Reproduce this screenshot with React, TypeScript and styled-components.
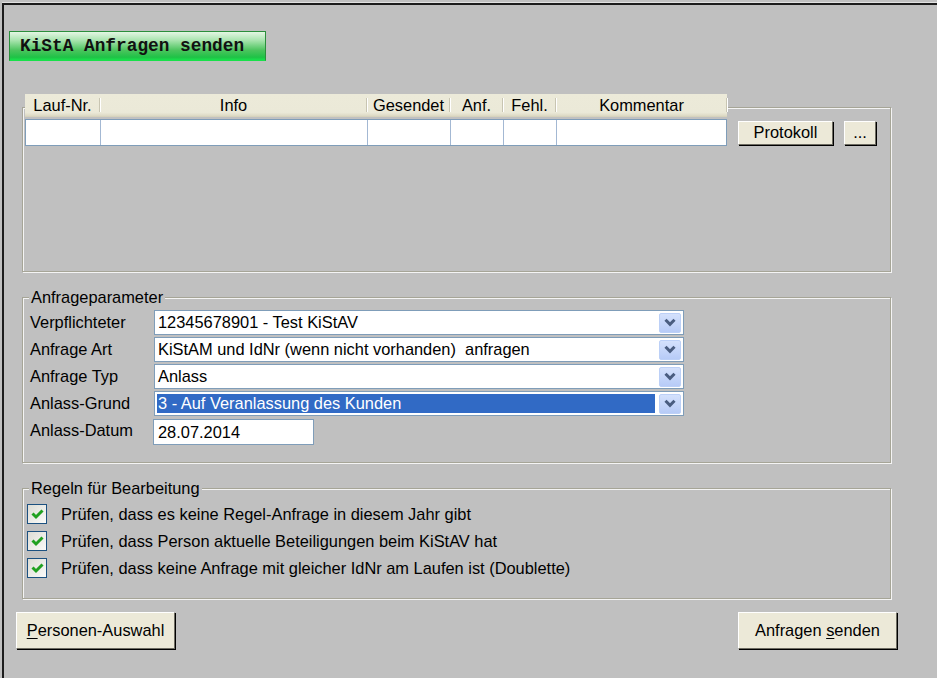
import { Fragment } from "react";
import styled, { createGlobalStyle } from "styled-components";

const GlobalStyle = createGlobalStyle`
  html, body {
    margin: 0;
    padding: 0;
    background: #c0c0c0;
    overflow: hidden;
  }
  body {
    font-family: "Liberation Sans", Arial, sans-serif;
    font-size: 16.4px;
    color: #000;
  }
`;

const Screen = styled.div`
  width: 937px;
  height: 678px;
  padding-top: 3px;
  box-sizing: border-box;
  background: #c0c0c0;
`;

const Window = styled.div`
  margin-left: 2px;
  height: 675px;
  box-sizing: border-box;
  border-top: 2px solid #1c1c1c;
  border-left: 2px solid #1c1c1c;
  box-shadow: 0 -1px 0 #e2e2e2;
`;

const TitleBar = styled.div`
  margin: 26px 0 0 5px;
  width: 257px;
  height: 30px;
  box-sizing: border-box;
  display: flex;
  align-items: center;
  padding-left: 10px;
  border: 1px solid #2b8f3c;
  border-bottom-color: #18e04a;
  background: linear-gradient(#e4f6e4 0%, #a8e4ae 30%, #4cc45e 65%, #1fc246 90%, #19e04c 100%);
  font-family: "Liberation Mono", "Courier New", monospace;
  font-weight: bold;
  font-size: 17.8px;
  color: #111;
`;

const Group = styled.div<{ $top: number; $height: number }>`
  margin: ${(p) => p.$top}px 0 0 18px;
  width: 869px;
  height: ${(p) => p.$height}px;
  box-sizing: border-box;
  border: 1px solid #a6a597;
  box-shadow: inset 1px 1px 0 #f4f4f4, 1px 1px 0 #f4f4f4;
`;

const Legend = styled.div`
  display: block;
  width: fit-content;
  height: 19px;
  line-height: 19px;
  margin: -10px 0 0 6px;
  padding: 0 2px;
  background: #c0c0c0;
`;

/* table */

const TableArea = styled.div`
  margin: -14px 0 0 2px;
`;

const cols = "75px 267px 83px 53px 53px 171px";

const HeaderRow = styled.div`
  display: grid;
  grid-template-columns: ${cols};
  width: 702px;
  height: 23px;
  background: linear-gradient(#ecead9 0%, #ebe9d8 80%, #e0ddc9 92%, #d3cfb8 100%);
`;

const HeaderCell = styled.div`
  position: relative;
  display: flex;
  align-items: center;
  justify-content: center;
  padding-bottom: 1px;
  &::after {
    content: "";
    position: absolute;
    right: 0;
    top: 4px;
    height: 14px;
    width: 1px;
    background: #c8c5b2;
    box-shadow: 1px 0 0 #fff;
  }
`;

const DataRow = styled.div`
  display: flex;
  align-items: center;
  margin-top: 2px;
`;

const Cells = styled.div`
  display: grid;
  grid-template-columns: ${cols};
  width: 702px;
  height: 27px;
  box-sizing: border-box;
  border: 1px solid #7f9db9;
  background: #fff;
`;

const Cell = styled.div`
  border-right: 1px solid #a3b8d3;
  &:last-child {
    border-right: none;
  }
`;

const Button = styled.button<{ $w: number; $h: number; $ml?: number }>`
  width: ${(p) => p.$w}px;
  height: ${(p) => p.$h}px;
  margin-left: ${(p) => p.$ml ?? 0}px;
  box-sizing: border-box;
  padding: 0;
  background: #ece9d8;
  border: 1px solid #fff;
  border-right-color: #6e6c62;
  border-bottom-color: #6e6c62;
  box-shadow: 1px 1px 0 #000;
  font-family: inherit;
  font-size: 16.4px;
  color: #000;
  display: flex;
  align-items: center;
  justify-content: center;
  u {
    text-decoration: underline;
    text-underline-offset: 2px;
  }
`;

/* parameters */

const ParamGrid = styled.div`
  display: grid;
  grid-template-columns: 124px 530px;
  row-gap: 2px;
  margin: 3px 0 0 7px;
`;

const Label = styled.div`
  display: flex;
  align-items: center;
  height: 25px;
`;

const Combo = styled.div`
  display: flex;
  align-items: center;
  height: 25px;
  box-sizing: border-box;
  border: 1px solid #7f9db9;
  background: #fff;
  padding: 2px;
`;

const ComboText = styled.div<{ $selected?: boolean }>`
  flex: 1;
  align-self: stretch;
  display: flex;
  align-items: center;
  margin-right: 4px;
  padding-left: 1px;
  background: ${(p) => (p.$selected ? "#316ac5" : "transparent")};
  color: ${(p) => (p.$selected ? "#fff" : "#000")};
  white-space: pre;
`;

const DropButton = styled.div`
  width: 22px;
  height: 20px;
  box-sizing: border-box;
  border: 1px solid #bcd0f7;
  border-radius: 2px;
  background: linear-gradient(#d4e1fc, #b7cbf7);
  display: flex;
  align-items: center;
  justify-content: center;
`;

const DateInput = styled.div`
  margin-left: -1px;
  margin-top: 1px;
  width: 161px;
  height: 26px;
  box-sizing: border-box;
  border: 1px solid #7f9db9;
  background: #fff;
  display: flex;
  align-items: center;
  padding-left: 4px;
`;

/* rules */

const RuleList = styled.div`
  display: flex;
  flex-direction: column;
  gap: 7px;
  margin: 6px 0 0 4px;
`;

const RuleRow = styled.label`
  display: flex;
  align-items: center;
  gap: 14px;
  height: 20px;
`;

const CheckBox = styled.span`
  width: 20px;
  height: 20px;
  box-sizing: border-box;
  border: 1px solid #1c5180;
  background: linear-gradient(135deg, #dcdcd5, #fbfbf9);
  display: flex;
  align-items: center;
  justify-content: center;
`;

const Footer = styled.div`
  display: flex;
  justify-content: space-between;
  margin: 13px 0 0 12px;
  width: 881px;
`;

const Chevron = () => (
  <svg width="12" height="9" viewBox="0 0 12 9">
    <path d="M1.5 1.8 L6 6.3 L10.5 1.8" fill="none" stroke="#4a5d80" strokeWidth="3" />
  </svg>
);

const Check = () => (
  <svg width="13" height="12" viewBox="0 0 13 12">
    <path d="M1.5 5.5 L5 9 L11.5 2.5" fill="none" stroke="#21a121" strokeWidth="3" />
  </svg>
);

const headers = ["Lauf-Nr.", "Info", "Gesendet", "Anf.", "Fehl.", "Kommentar"];

const combos = [
  { label: "Verpflichteter", value: "12345678901 - Test KiStAV" },
  { label: "Anfrage Art", value: "KiStAM und IdNr (wenn nicht vorhanden)  anfragen" },
  { label: "Anfrage Typ", value: "Anlass" },
  { label: "Anlass-Grund", value: "3 - Auf Veranlassung des Kunden", selected: true },
];

const rules = [
  "Prüfen, dass es keine Regel-Anfrage in diesem Jahr gibt",
  "Prüfen, dass Person aktuelle Beteiligungen beim KiStAV hat",
  "Prüfen, dass keine Anfrage mit gleicher IdNr am Laufen ist (Doublette)",
];

export default function App() {
  return (
    <>
      <GlobalStyle />
      <Screen>
        <Window>
          <TitleBar>KiStA Anfragen senden</TitleBar>

          <Group $top={46} $height={165}>
            <TableArea>
              <HeaderRow>
                {headers.map((h) => (
                  <HeaderCell key={h}>{h}</HeaderCell>
                ))}
              </HeaderRow>
              <DataRow>
                <Cells>
                  {headers.map((h) => (
                    <Cell key={h} />
                  ))}
                </Cells>
                <Button $w={95} $h={24} $ml={11}>
                  Protokoll
                </Button>
                <Button $w={32} $h={24} $ml={11}>
                  ...
                </Button>
              </DataRow>
            </TableArea>
          </Group>

          <Group $top={25} $height={166}>
            <Legend>Anfrageparameter</Legend>
            <ParamGrid>
              {combos.map((c) => (
                <Fragment key={c.label}>
                  <Label>{c.label}</Label>
                  <Combo>
                    <ComboText $selected={c.selected}>{c.value}</ComboText>
                    <DropButton>
                      <Chevron />
                    </DropButton>
                  </Combo>
                </Fragment>
              ))}
              <Label>Anlass-Datum</Label>
              <DateInput>28.07.2014</DateInput>
            </ParamGrid>
          </Group>

          <Group $top={25} $height={111}>
            <Legend>Regeln für Bearbeitung</Legend>
            <RuleList>
              {rules.map((r) => (
                <RuleRow key={r}>
                  <CheckBox>
                    <Check />
                  </CheckBox>
                  {r}
                </RuleRow>
              ))}
            </RuleList>
          </Group>

          <Footer>
            <Button $w={159} $h={37}>
              <span>
                <u>P</u>ersonen-Auswahl
              </span>
            </Button>
            <Button $w={159} $h={37}>
              <span>
                Anfragen <u>s</u>enden
              </span>
            </Button>
          </Footer>
        </Window>
      </Screen>
    </>
  );
}
